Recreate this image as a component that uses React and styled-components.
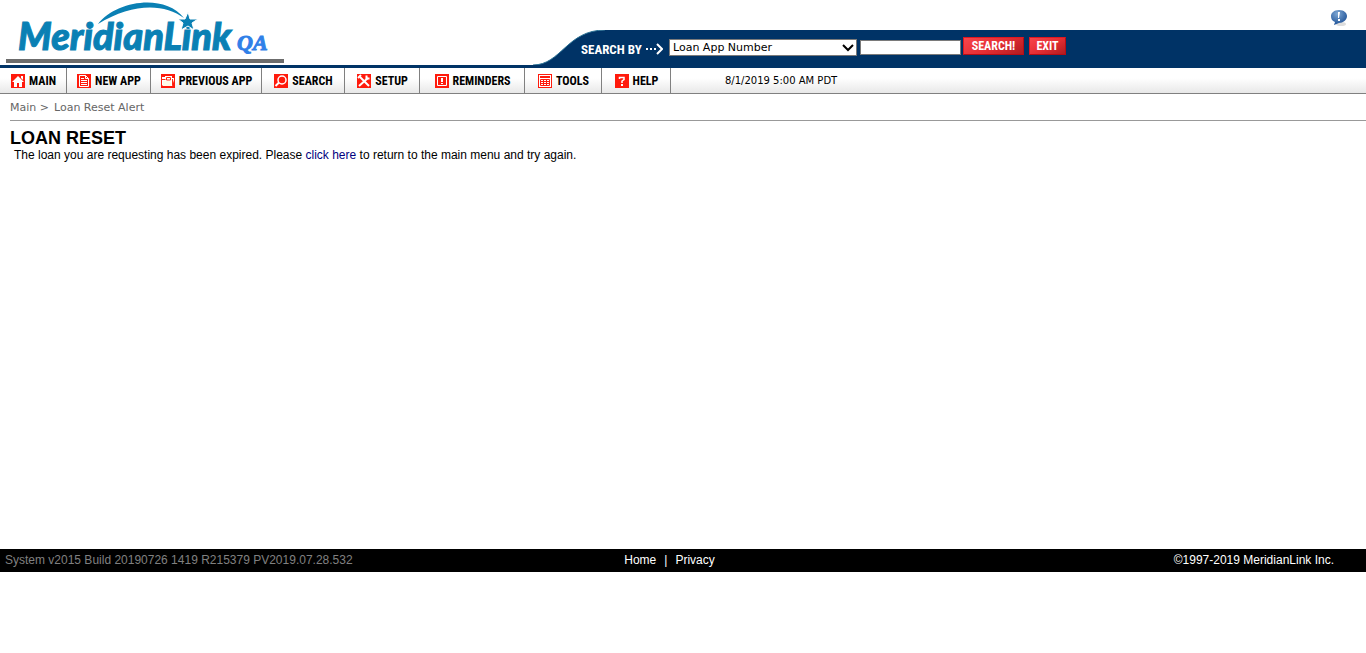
import React from "react";
import styled, { createGlobalStyle } from "styled-components";

const navy = "#003366";
const sans = '"Liberation Sans", Arial, sans-serif';
const verdana = 'Verdana, "DejaVu Sans", sans-serif';
const narrow = '"Liberation Sans Narrow", "Arial Narrow", "Roboto Condensed", sans-serif';

const GlobalStyle = createGlobalStyle`
  * { box-sizing: border-box; }
  body { margin: 0; background: #fff; color: #000; font: 12px/14px ${sans}; }
`;

const Header = styled.header`
  display: flex;
  justify-content: space-between;
  border-bottom: 3px solid ${navy};
`;

const LogoLink = styled.a`
  display: block;
  flex: none;
  width: 284px;
  height: 65px;
  svg { display: block; }
`;

const HeaderRight = styled.div`
  flex: none;
  width: calc(100% - 533px);
`;

const AlertRow = styled.div`
  display: flex;
  justify-content: flex-end;
  height: 30px;
  padding: 10px 19px 0 0;
`;

const AlertButton = styled.button`
  width: 16px;
  height: 16px;
  padding: 0;
  border: 0;
  background: none;
  svg { display: block; }
`;

const SearchBar = styled.form`
  position: relative;
  display: flex;
  align-items: center;
  height: 35px;
  padding-left: 48px;
  background: linear-gradient(${navy}, ${navy}) 72px 0 no-repeat;
`;

const Swoosh = styled.svg`
  position: absolute;
  left: 0;
  top: 0;
`;

const SearchLabel = styled.label`
  position: relative;
  display: flex;
  align-items: center;
  gap: 4px;
  width: 88px;
  padding-top: 4px;
  color: #fff;
  font: bold 13px/16px ${narrow};
  white-space: nowrap;
`;

const SelectWrap = styled.div`
  position: relative;
  flex: none;
  width: 188px;
  height: 17px;
`;

const SearchSelect = styled.select`
  display: block;
  width: 100%;
  height: 17px;
  padding: 0 3px;
  appearance: none;
  border: 1px solid #7a7a7a;
  border-radius: 0;
  background: #fff;
  color: #000;
  font: 11px/15px ${verdana};
`;

const Chevron = styled.svg`
  position: absolute;
  right: 3px;
  top: 5px;
  pointer-events: none;
`;

const SearchInput = styled.input`
  flex: none;
  width: 101px;
  height: 15px;
  margin: 0 2px 0 3px;
  padding: 0 2px;
  border: 1px solid #7a7a7a;
  font: 11px/13px ${verdana};
`;

const RedButton = styled.button`
  flex: none;
  width: ${(p) => p.$width}px;
  height: 18px;
  margin: 0 5px 3px 0;
  padding: 0;
  border: 1px solid;
  border-color: #e01820 #b80c14 #b80c14 #e01820;
  background: linear-gradient(150deg, #f8464c 0%, #e62e34 50%, #b01c20 100%);
  color: #fff;
  font: bold 12px/16px ${narrow};
`;

const Nav = styled.nav`
  display: flex;
  height: 26px;
  border-bottom: 1px solid #808080;
  background: linear-gradient(#fff 40%, #e8e8e8);
`;

const NavLink = styled.a`
  display: flex;
  flex: none;
  align-items: center;
  justify-content: center;
  gap: 4px;
  width: ${(p) => p.$width}px;
  padding-left: 1px;
  border-right: 1px solid #808080;
  color: #000;
  font: bold 12px/14px ${narrow};
  text-decoration: none;
  white-space: nowrap;
  svg { flex: none; }
`;

const Clock = styled.time`
  padding-left: 54px;
  font: 10px/25px ${verdana};
`;

const Breadcrumb = styled.nav`
  display: flex;
  gap: 5px;
  margin-left: 10px;
  padding: 7px 0 5px;
  border-bottom: 1px solid #999;
  color: #666;
  font: 11px/14px ${verdana};
  a { color: inherit; text-decoration: none; }
`;

const Content = styled.main`
  min-height: 428px;
  padding: 7px 10px 0;
`;

const Title = styled.h1`
  margin: 0;
  font: bold 18px/20px ${sans};
`;

const Message = styled.p`
  margin: 0;
  padding-left: 4px;
  a { color: #000080; text-decoration: none; }
`;

const Footer = styled.footer`
  display: grid;
  grid-template-columns: 1fr auto 1fr;
  align-items: center;
  height: 23px;
  padding: 0 32px 2px 5px;
  background: #000;
  color: #fff;
`;

const Build = styled.span`
  color: #808080;
`;

const FooterLinks = styled.div`
  display: flex;
  gap: 8px;
  a { color: #fff; text-decoration: none; }
`;

const Copyright = styled.span`
  text-align: right;
`;

const Logo = () => (
  <svg width="284" height="65" viewBox="0 0 284 65" role="img" aria-label="MeridianLink QA">
    <text x="18" y="50" fill="#0a80b4" stroke="#0a80b4" strokeWidth="1" fontFamily="Lato, sans-serif" fontSize="38" fontWeight="900" fontStyle="italic">MeridianLink</text>
    <path d="M98 24 C116 1 164 -7 184 18 C164 3 132 3 98 24Z" fill="#0a80b4" />
    <path d="M188 12 L190 19 L198 19 L192 23 L194 30 L188 26 L181 30 L183 23 L178 19 L185 19Z" fill="#0a80b4" stroke="#fff" strokeWidth="1" />
    <text x="237" y="50" fill="#3080e8" stroke="#3080e8" strokeWidth="1" fontFamily="Liberation Serif, serif" fontSize="22" fontWeight="bold" fontStyle="italic">QA</text>
    <rect x="6" y="59" width="278" height="4" fill="#6c6c6c" />
  </svg>
);

const glyphs = {
  home: <path d="M7 2 L13 8 H11 V13 H8 V9 H6 V13 H3 V8 H1Z M10 2 H12 V6 L10 4Z" fill="#fff" />,
  page: (
    <g fill="none" stroke="#fff">
      <path d="M2.5 1.5 H8.5 L11.5 4.5 V12.5 H2.5Z M8.5 1.5 V4.5 H11.5" />
      <path d="M4 4.5 H7 M4 6.5 H10 M4 8.5 H10 M4 10.5 H10" />
    </g>
  ),
  folder: (
    <g>
      <path d="M1 3 H4 V2 H11 V4 H13 V6 L11 12 H2 L1 11Z" fill="#fff" />
      <path d="M5.5 6 V3.5 H9.5 V6Z M1 5.5 H4.5 M11.5 5 V11" fill="none" stroke="#ff2a10" />
      <path d="M2 7 H10 V12 H2Z" fill="#fffbe8" />
    </g>
  ),
  search: (
    <g fill="none" stroke="#fff">
      <circle cx="8" cy="6" r="4" strokeWidth="1.5" />
      <path d="M5 8.5 L1.5 12" strokeWidth="2" />
    </g>
  ),
  setup: (
    <g fill="none" stroke="#fff">
      <path d="M3 3 L12 12" strokeWidth="2" />
      <path d="M11 4 L2 12" strokeWidth="2" />
      <path d="M1 4 L4 1 M9.5 1.5 V4.5 H12.5" strokeWidth="2" />
    </g>
  ),
  reminder: (
    <g>
      <path d="M2.5 2.5 H11.5 V11.5 H2.5Z" fill="none" stroke="#fff" />
      <path d="M6 4 H8 V8 H6Z M6 9 H8 V10 H6Z" fill="#fff" />
    </g>
  ),
  tools: (
    <g>
      <path d="M1 1 H13 V13 H1Z" fill="#fff" />
      <path d="M2 2 H12 V4 H2Z" fill="#ff1a0c" />
      <path d="M2.5 5.5 H11.5 V11.5 H2.5Z M2 7.5 H12 M2 9.5 H12 M5.5 5 V12 M8.5 5 V12" fill="none" stroke="#ff1a0c" />
    </g>
  ),
  help: (
    <g>
      <path d="M4.5 5 V3.5 H9 V5.5 L7 7 V9" fill="none" stroke="#fff" strokeWidth="1.5" />
      <path d="M6 10 H8 V12 H6Z" fill="#fff" />
    </g>
  ),
};

const NavIcon = ({ name }) => (
  <svg width="14" height="14" viewBox="0 0 14 14" aria-hidden="true">
    <rect width="14" height="14" fill="#ff1a0c" />
    {glyphs[name]}
  </svg>
);

const menu = [
  { label: "MAIN", icon: "home", width: 67 },
  { label: "NEW APP", icon: "page", width: 84 },
  { label: "PREVIOUS APP", icon: "folder", width: 111 },
  { label: "SEARCH", icon: "search", width: 83 },
  { label: "SETUP", icon: "setup", width: 75 },
  { label: "REMINDERS", icon: "reminder", width: 105 },
  { label: "TOOLS", icon: "tools", width: 77 },
  { label: "HELP", icon: "help", width: 69 },
];

export default function App() {
  return (
    <>
      <GlobalStyle />
      <Header>
        <LogoLink href="#main"><Logo /></LogoLink>
        <HeaderRight>
          <AlertRow>
            <AlertButton type="button" aria-label="Notifications">
              <svg width="16" height="16" viewBox="0 0 16 16">
                <defs>
                  <radialGradient id="bubble" cx="40%" cy="25%" r="75%">
                    <stop offset="0" stopColor="#7fa8d4" />
                    <stop offset="1" stopColor="#1c5096" />
                  </radialGradient>
                </defs>
                <ellipse cx="10" cy="14" rx="5" ry="2" fill="#ddd" />
                <path d="M8 0 C13 0 16 3 16 6 C16 10 12 13 8 13 L3 15 L4 12 C1 11 0 9 0 6 C0 3 3 0 8 0Z" fill="url(#bubble)" />
                <path d="M7 2 H9 L8 8 H7Z M7 9 H9 V11 H7Z" fill="#fff" />
              </svg>
            </AlertButton>
          </AlertRow>
          <SearchBar onSubmit={(e) => e.preventDefault()}>
            <Swoosh width="72" height="35" viewBox="0 0 72 35" aria-hidden="true">
              <path d="M0 35 C28 35 34 0 72 0 V35Z" fill={navy} />
              <path d="M0 35 C28 35 34 0 72 0" fill="none" stroke="#2a7294" />
            </Swoosh>
            <SearchLabel htmlFor="criteria">
              SEARCH BY
              <svg width="17" height="13" viewBox="0 0 17 13" aria-hidden="true">
                <path d="M0 5 H2 V7 H0Z M4 5 H6 V7 H4Z M8 5 H10 V7 H8Z" fill="#fff" />
                <path d="M11 1 L16 6 L11 11" fill="none" stroke="#fff" strokeWidth="2" />
              </svg>
            </SearchLabel>
            <SelectWrap>
              <SearchSelect id="criteria"><option>Loan App Number</option></SearchSelect>
              <Chevron width="12" height="8" viewBox="0 0 12 8" aria-hidden="true">
                <path d="M1 1 L6 6 L11 1" fill="none" stroke="#000" strokeWidth="2" />
              </Chevron>
            </SelectWrap>
            <SearchInput type="text" aria-label="Search value" />
            <RedButton type="submit" $width={61}>SEARCH!</RedButton>
            <RedButton type="button" $width={37}>EXIT</RedButton>
          </SearchBar>
        </HeaderRight>
      </Header>
      <Nav aria-label="Main menu">
        {menu.map((m) => (
          <NavLink key={m.label} href={`#${m.icon}`} $width={m.width}>
            <NavIcon name={m.icon} />
            {m.label}
          </NavLink>
        ))}
        <Clock dateTime="2019-08-01T05:00:00-07:00">8/1/2019 5:00 AM PDT</Clock>
      </Nav>
      <Breadcrumb aria-label="Breadcrumb">
        <span><a href="#main">Main</a> &gt;</span>
        <span>Loan Reset Alert</span>
      </Breadcrumb>
      <Content>
        <Title>LOAN RESET</Title>
        <Message>
          The loan you are requesting has been expired. Please <a href="#main">click here</a> to return to the main menu and try again.
        </Message>
      </Content>
      <Footer>
        <Build>System v2015 Build 20190726 1419 R215379 PV2019.07.28.532</Build>
        <FooterLinks>
          <a href="#home">Home</a>
          <span>|</span>
          <a href="#privacy">Privacy</a>
        </FooterLinks>
        <Copyright>©1997-2019 MeridianLink Inc.</Copyright>
      </Footer>
    </>
  );
}
